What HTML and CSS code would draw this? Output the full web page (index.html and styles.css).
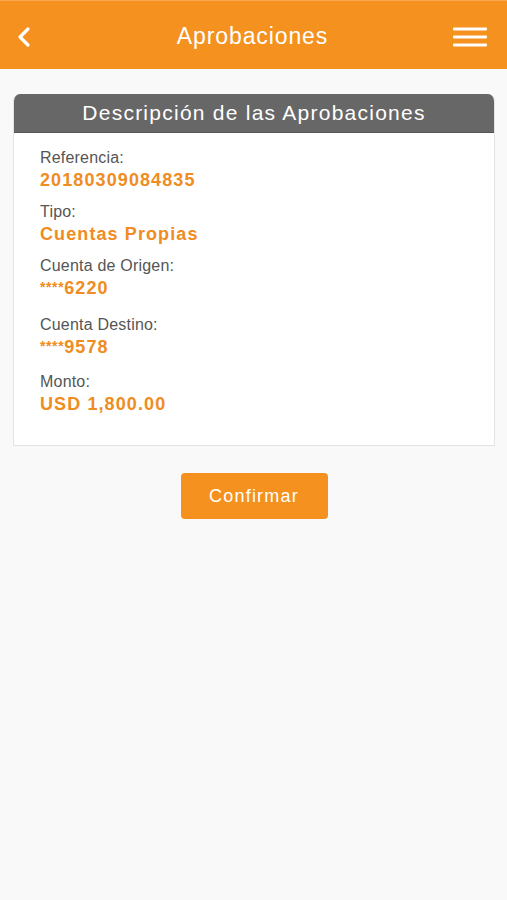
FILE: index.html
```html
<!DOCTYPE html>
<html lang="es">
<head>
<meta charset="utf-8">
<title>Aprobaciones</title>
<link rel="stylesheet" href="styles.css">
</head>
<body>
<header class="topbar">
  <svg class="back" width="16" height="22" viewBox="0 0 16 22"><path d="M12 3 L4 11 L12 19" fill="none" stroke="#fff" stroke-width="3.2" stroke-linecap="round" stroke-linejoin="round"/></svg>
  <h1 class="title">Aprobaciones</h1>
  <svg class="menu" width="36" height="22" viewBox="0 0 36 22"><rect x="0" y="1.5" width="34" height="3" rx="1" fill="#fff"/><rect x="0" y="9.5" width="34" height="3" rx="1" fill="#fff"/><rect x="0" y="17.5" width="34" height="3" rx="1" fill="#fff"/></svg>
</header>
<main class="content">
  <section class="card">
    <div class="card-head">Descripción de las Aprobaciones</div>
    <div class="card-body">
      <div class="item"><div class="label">Referencia:</div><div class="value">20180309084835</div></div>
      <div class="item"><div class="label">Tipo:</div><div class="value">Cuentas Propias</div></div>
      <div class="item"><div class="label">Cuenta de Origen:</div><div class="value"><span class="stars">****</span>6220</div></div>
      <div class="item wide"><div class="label">Cuenta Destino:</div><div class="value"><span class="stars">****</span>9578</div></div>
      <div class="item wide2"><div class="label">Monto:</div><div class="value">USD 1,800.00</div></div>
    </div>
  </section>
  <div class="actions"><button class="btn">Confirmar</button></div>
</main>
</body>
</html>
```
FILE: styles.css
```css
html, body {
  margin: 0;
  padding: 0;
  background: #f9f9f9;
  font-family: "Liberation Sans", Arial, sans-serif;
}
.topbar {
  height: 69px;
  background: #f5911f;
  display: grid;
  grid-template-columns: 1fr auto 1fr;
  align-items: center;
  padding: 3px 18px 0 16px;
  box-sizing: border-box;
  border-top: 1px solid #f7a850;
}
.back { display: block; justify-self: start; }
.menu { display: block; justify-self: end; }
.title {
  margin: 0;
  color: #fff;
  font-weight: normal;
  font-size: 23px;
  letter-spacing: 0.9px;
}
.content {
  padding: 25px 12px 0 13px;
}
.card {
  background: #fff;
  border: 1px solid #e3e3e3;
  border-top: none;
  border-radius: 7px 7px 0 0;
  overflow: hidden;
}
.card-head {
  background: #676767;
  color: #fff;
  height: 38px;
  line-height: 37px;
  text-align: center;
  font-size: 21px;
  letter-spacing: 1.25px;
  border-bottom: 1px solid #555;
}
.card-body {
  padding: 15px 26px 30px;
}
.item { margin-top: 11px; }
.item:first-child { margin-top: 0; }
.item.wide { margin-top: 15px; }
.item.wide2 { margin-top: 13px; }
.label {
  color: #555;
  font-size: 16px;
  line-height: 20px;
  letter-spacing: 0.2px;
}
.value {
  color: #ef8c22;
  font-size: 18px;
  font-weight: bold;
  line-height: 22px;
  letter-spacing: 1.1px;
  margin-top: 1px;
}
.stars {
  font-size: 14px;
  letter-spacing: 0.6px;
  position: relative;
  top: -2px;
}
.actions {
  display: flex;
  justify-content: center;
  padding-top: 27px;
}
.btn {
  width: 147px;
  height: 46px;
  border: none;
  border-radius: 4px;
  background: #f5911f;
  color: #fff;
  font-family: "Liberation Sans", Arial, sans-serif;
  font-size: 18px;
  letter-spacing: 1.2px;
}
```
